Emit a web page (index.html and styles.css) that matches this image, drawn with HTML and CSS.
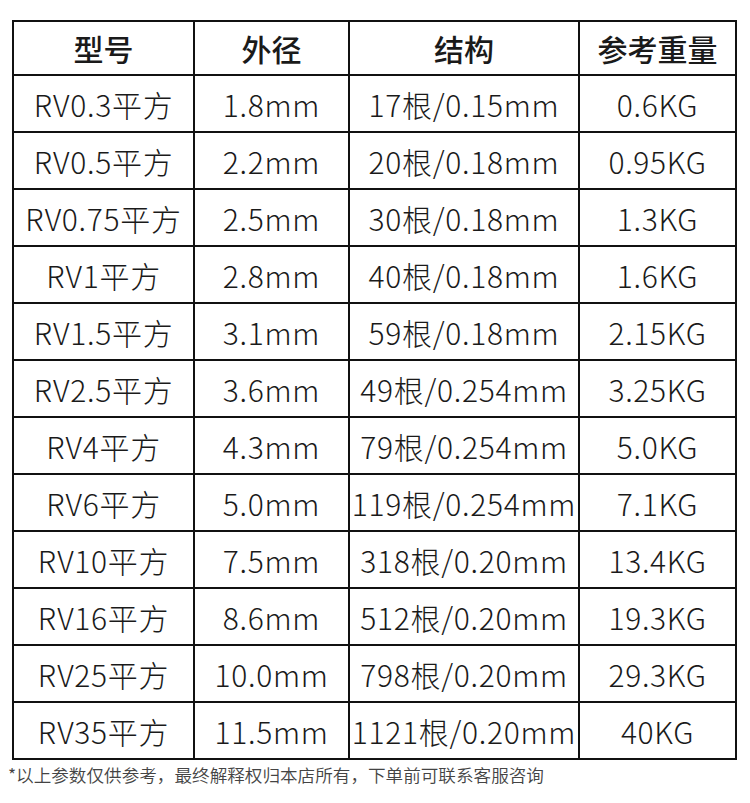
FILE: index.html
```html
<!DOCTYPE html>
<html lang="zh">
<head>
<meta charset="utf-8">
<link rel="stylesheet" href="styles.css">
</head>
<body>
<table class="spec">
  <colgroup>
    <col class="c1"><col class="c2"><col class="c3"><col class="c4">
  </colgroup>
  <thead>
    <tr><th>型号</th><th>外径</th><th>结构</th><th>参考重量</th></tr>
  </thead>
  <tbody>
    <tr><td>RV0.3平方</td><td>1.8mm</td><td>17根/0.15mm</td><td>0.6KG</td></tr>
    <tr><td>RV0.5平方</td><td>2.2mm</td><td>20根/0.18mm</td><td>0.95KG</td></tr>
    <tr><td>RV0.75平方</td><td>2.5mm</td><td>30根/0.18mm</td><td>1.3KG</td></tr>
    <tr><td>RV1平方</td><td>2.8mm</td><td>40根/0.18mm</td><td>1.6KG</td></tr>
    <tr><td>RV1.5平方</td><td>3.1mm</td><td>59根/0.18mm</td><td>2.15KG</td></tr>
    <tr><td>RV2.5平方</td><td>3.6mm</td><td>49根/0.254mm</td><td>3.25KG</td></tr>
    <tr><td>RV4平方</td><td>4.3mm</td><td>79根/0.254mm</td><td>5.0KG</td></tr>
    <tr><td>RV6平方</td><td>5.0mm</td><td>119根/0.254mm</td><td>7.1KG</td></tr>
    <tr><td>RV10平方</td><td>7.5mm</td><td>318根/0.20mm</td><td>13.4KG</td></tr>
    <tr><td>RV16平方</td><td>8.6mm</td><td>512根/0.20mm</td><td>19.3KG</td></tr>
    <tr><td>RV25平方</td><td>10.0mm</td><td>798根/0.20mm</td><td>29.3KG</td></tr>
    <tr><td>RV35平方</td><td>11.5mm</td><td>1121根/0.20mm</td><td>40KG</td></tr>
  </tbody>
</table>
<p class="note">*以上参数仅供参考，最终解释权归本店所有，下单前可联系客服咨询</p>
</body>
</html>
```
FILE: styles.css
```css
html, body {
  margin: 0;
  padding: 0;
  background: #fff;
}
body {
  font-family: "Noto Sans CJK SC", "Noto Sans", sans-serif;
  color: #1a1a1a;
}
.spec {
  border-collapse: collapse;
  table-layout: fixed;
  width: 723px;
  margin: 20px 0 0 12px;
}
.c1 { width: 181px; }
.c2 { width: 155px; }
.c3 { width: 230px; }
.c4 { width: 157px; }
.spec th, .spec td {
  border: 2px solid #111;
  text-align: center;
  padding: 0;
  font-size: 30px;
  white-space: nowrap;
}
.spec th {
  height: 52px;
  font-weight: 500;
}
.spec td {
  height: 55px;
  font-weight: 300;
  letter-spacing: 0.7px;
}
.note {
  margin: 3px 0 0 8px;
  font-size: 17.6px;
  line-height: 24px;
  font-weight: 350;
  color: #444;
}
```
